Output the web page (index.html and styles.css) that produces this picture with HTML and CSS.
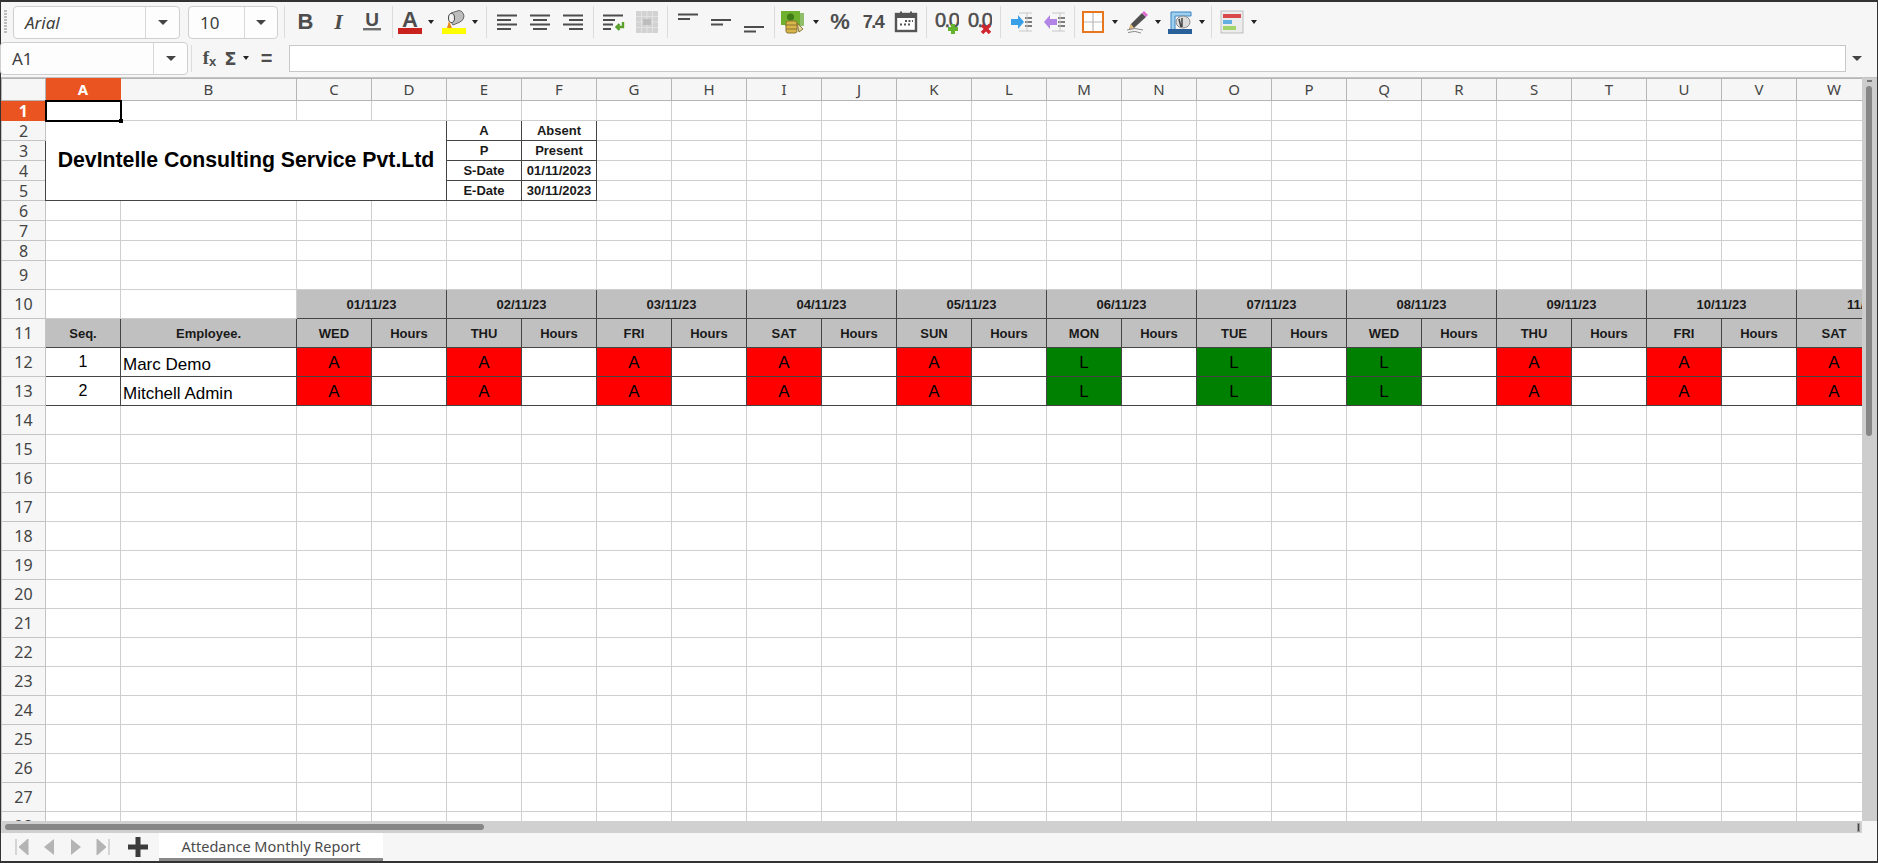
FILE: index.html
```html
<!DOCTYPE html>
<html lang="en">

<head>
    <meta charset="UTF-8">
    <title>Attedance Monthly Report</title>
    <link rel="stylesheet" href="styles.css">
</head>

<body>
<div class="app">
    <div class="toolbar">
        <span class="grip"></span>
        <div class="combo combo-font"><span class="combo-text italic">Arial</span><span class="combo-arrow"><i class="caret"></i></span></div>
        <div class="combo combo-size"><span class="combo-text">10</span><span class="combo-arrow"><i class="caret"></i></span></div>
        <span class="sep sep-first"></span>
        <span class="btn glyph">B</span>
        <span class="btn glyph glyph-i">I</span>
        <span class="btn">
            <svg width="24" height="24" viewBox="0 0 24 24"><text x="12" y="16" class="svg-bold" font-size="19" text-anchor="middle">U</text><rect x="3" y="18" width="18" height="2.400" fill="#6e6e6e"/></svg>
        </span>
        <span class="sep"></span>
        <span class="btn btn-first">
            <svg width="24" height="24" viewBox="0 0 24 24"><text x="12" y="17" class="svg-bold" font-size="22" text-anchor="middle">A</text><rect x="0" y="18" width="24" height="6" fill="#c9211e"/></svg>
        </span>
        <span class="drop"></span>
        <span class="btn">
            <svg width="24" height="24" viewBox="0 0 24 24"><rect x="0" y="18" width="24" height="6" fill="#ffff00"/><path d="M9 3 L17 0.500 Q21 1 22 6 Q22 10 18 12 L11 15 Q8 11 7 8 Z" fill="#bdbdbd" stroke="#666"/><ellipse cx="9.500" cy="8" rx="3" ry="4.500" fill="#f2f2f2" stroke="#444"/><path d="M7 11 L10 18 L5 18 Z" fill="#e8891c"/></svg>
        </span>
        <span class="drop"></span>
        <span class="sep sep-wide"></span>
        <span class="btn"><svg width="24" height="24" viewBox="0 0 24 24"><path d="M2 5.500H22M2 10H16M2 14.500H22M2 19H16" class="svg-line"/></svg></span>
        <span class="btn"><svg width="24" height="24" viewBox="0 0 24 24"><path d="M2 5.500H22M5 10H19M2 14.500H22M5 19H19" class="svg-line"/></svg></span>
        <span class="btn"><svg width="24" height="24" viewBox="0 0 24 24"><path d="M2 5.500H22M8 10H22M2 14.500H22M8 19H22" class="svg-line"/></svg></span>
        <span class="sep"></span>
        <span class="btn">
            <svg width="24" height="24" viewBox="0 0 24 24"><path d="M1 5.500H21M1 10H13M1 14.500H11M1 19H9" class="svg-line"/><path d="M21 12 V17 H15 M17.500 14 L14.500 17 L17.500 20" fill="none" stroke="#5aa02c" stroke-width="2.400"/></svg>
        </span>
        <span class="btn">
            <svg width="24" height="24" viewBox="0 0 24 24"><rect x="1" y="1" width="22" height="22" rx="1" fill="#d2d2d2"/><path d="M1 6.500H23M1 12H23M1 17.500H23M6.500 1V23M12 1V23M17.500 1V23" stroke="#e2e2e2"/><rect x="8" y="9" width="8" height="6" fill="#bdbdbd"/></svg>
        </span>
        <span class="sep"></span>
        <span class="btn"><svg width="24" height="24" viewBox="0 0 24 24"><path d="M2 4.500H22M2 9H14" class="svg-line"/></svg></span>
        <span class="btn"><svg width="24" height="24" viewBox="0 0 24 24"><path d="M2 10H22M2 14.500H14" class="svg-line"/></svg></span>
        <span class="btn"><svg width="24" height="24" viewBox="0 0 24 24"><path d="M2 18H22M2 22.500H14" transform="translate(0 -1)" class="svg-line"/></svg></span>
        <span class="sep"></span>
        <span class="btn btn-first">
            <svg width="24" height="24" viewBox="0 0 24 24"><rect x="5" y="3" width="19" height="13" fill="#8fbf6a"/><rect x="1" y="1" width="19" height="14" fill="#6fb02e"/><circle cx="10.500" cy="7" r="3.500" fill="#3f7a16"/><rect x="6" y="11" width="11" height="12" rx="2" fill="#d9b64a" stroke="#8a7430"/><path d="M6 15H17M6 19H17" stroke="#8a7430"/><path d="M17 13L23 19L19 22Z" fill="#e5d9a6" stroke="#8a7430"/></svg>
        </span>
        <span class="drop drop-gap"></span>
        <span class="btn glyph glyph-small">%</span>
        <span class="btn glyph glyph-num">7.4</span>
        <span class="btn">
            <svg width="24" height="24" viewBox="0 0 24 24"><rect x="2" y="4" width="20" height="17" fill="#fff" stroke="#555" stroke-width="2.400"/><rect x="2" y="3" width="20" height="5" fill="#555"/><rect x="6" y="1.500" width="2" height="3" fill="#555"/><rect x="16" y="1.500" width="2" height="3" fill="#555"/><path d="M11 11h2M14.500 11h2M18 11h1M6 14.500h2M10 14.500h2M14 14.500h2" stroke="#555" stroke-width="2"/></svg>
        </span>
        <span class="sep"></span>
        <span class="btn">
            <svg width="24" height="24" viewBox="0 0 24 24"><text x="0" y="17" class="svg-dec" font-size="20">0.0</text><path d="M13 19H23M18 14V24" stroke="#63b32e" stroke-width="4"/></svg>
        </span>
        <span class="btn">
            <svg width="24" height="24" viewBox="0 0 24 24"><text x="0" y="17" class="svg-dec" font-size="20">0.0</text><path d="M14 15L22 23M22 15L14 23" stroke="#d0262d" stroke-width="3.400"/></svg>
        </span>
        <span class="sep"></span>
        <span class="btn">
            <svg width="24" height="24" viewBox="0 0 24 24"><path d="M2 9H9V5L15 12L9 19V15H2Z" fill="#38a0e8"/><path d="M16 8H23M16 12H23M16 16H23" stroke="#555" stroke-width="1.600"/><path d="M10 3H23M10 21H23M18 3V21" stroke="#c8c8c8"/></svg>
        </span>
        <span class="btn">
            <svg width="24" height="24" viewBox="0 0 24 24"><path d="M15 9H8V5L2 12L8 19V15H15Z" fill="#b184e6"/><path d="M16 8H23M16 12H23M16 16H23" stroke="#555" stroke-width="1.600"/><path d="M10 3H23M10 21H23M18 3V21" stroke="#c8c8c8"/></svg>
        </span>
        <span class="sep sep-thin"></span>
        <span class="btn">
            <svg width="24" height="24" viewBox="0 0 24 24"><rect x="2" y="2" width="20" height="20" fill="#fff" stroke="#e8761c" stroke-width="2"/><path d="M12 3V21M3 12H21" stroke="#b9b9b9" stroke-width="1.200"/></svg>
        </span>
        <span class="drop"></span>
        <span class="btn btn-pack">
            <svg width="24" height="24" viewBox="0 0 24 24"><path d="M17 3L21 7L9 18L4 19L6 14Z" fill="#4f4f4f"/><path d="M17 3L19 1L23 5L21 7Z" fill="#e06ad0"/><path d="M6 14L4 19L9 18Z" fill="#e5c07a"/><path d="M2 20Q10 17 18 20M3 22.500Q10 20 16 23" fill="none" stroke="#8a8a8a"/></svg>
        </span>
        <span class="drop"></span>
        <span class="btn btn-pack">
            <svg width="24" height="24" viewBox="0 0 24 24"><path d="M3 22V2H23V6H7V22" fill="#9fd0ee" stroke="#3a82c4"/><rect x="0" y="19" width="24" height="5" fill="#2a6099"/><ellipse cx="15" cy="12" rx="7" ry="6" fill="#dcdcdc" stroke="#8a8a8a"/><path d="M11 9L13 17M14 8V17" stroke="#444" stroke-width="1.500"/></svg>
        </span>
        <span class="drop"></span>
        <span class="sep"></span>
        <span class="btn">
            <svg width="24" height="24" viewBox="0 0 24 24"><rect x="1" y="1" width="22" height="22" fill="#ececec" stroke="#bdbdbd"/><rect x="3" y="4" width="18" height="4" fill="#d84a4a"/><rect x="3" y="10" width="9" height="4" fill="#63b0e0"/><rect x="3" y="16" width="13" height="4" fill="#a3d46a"/></svg>
        </span>
        <span class="drop"></span>
    </div>

    <div class="formula-bar">
        <div class="combo combo-name"><span class="combo-text">A1</span><span class="combo-arrow"><i class="caret"></i></span></div>
        <span class="sep sep-short"></span>
        <span class="fx">f<sub>x</sub></span>
        <span class="fx fx-sigma">Σ</span>
        <span class="drop drop-small"></span>
        <span class="fx fx-eq">=</span>
        <div class="formula-input"></div>
        <span class="formula-arrow"><i class="caret"></i></span>
    </div>

    <div class="middle">
        <div class="sheet">
            <table class="grid" id="grid"></table>
        </div>
        <div class="vscroll"><span class="vscroll-min"></span><span class="vscroll-thumb"></span></div>
    </div>

    <div class="hscroll"><span class="hscroll-thumb"></span><span class="hscroll-end"></span></div>

    <div class="tabbar">
        <span class="nav"><svg width="14" height="18" viewBox="0 0 14 18"><path d="M1 1V17M13 1V17L4 9Z" fill="#b4b4b4" stroke="#b4b4b4"/></svg></span>
        <span class="nav"><svg width="14" height="18" viewBox="0 0 14 18"><path d="M12 1V17L2 9Z" fill="#b4b4b4"/></svg></span>
        <span class="nav"><svg width="14" height="18" viewBox="0 0 14 18"><path d="M2 1V17L12 9Z" fill="#b4b4b4"/></svg></span>
        <span class="nav"><svg width="14" height="18" viewBox="0 0 14 18"><path d="M13 1V17M1 1V17L10 9Z" fill="#b4b4b4" stroke="#b4b4b4"/></svg></span>
        <span class="nav-add"><svg width="20" height="20" viewBox="0 0 20 20"><path d="M10 0V20M0 10H20" stroke="#3c3c3c" stroke-width="5"/></svg></span>
        <span class="tab">Attedance Monthly Report</span>
    </div>
</div>
<script src="sheet.js"></script>
</body>

</html>
```

FILE: styles.css
```css
html,
body {
    margin: 0;
    height: 100%;
    overflow: hidden;
    font-family: "Noto Sans", "Open Sans", sans-serif;
}

.app {
    display: flex;
    flex-direction: column;
    box-sizing: border-box;
    width: 1878px;
    height: 863px;
    border: 1px solid #333;
    border-width: 2px 1px;
    background: #f6f6f6;
    color: #3d3d3d;
}

/* top toolbar */
.toolbar {
    display: flex;
    align-items: center;
    height: 40px;
    flex: none;
    padding-left: 3px;
}

.grip {
    width: 3px;
    height: 24px;
    margin-right: 6px;
    background: repeating-linear-gradient(#bdbdbd 0, #bdbdbd 2px, transparent 2px, transparent 3px);
}

.combo {
    display: flex;
    box-sizing: border-box;
    height: 33px;
    border: 1px solid #cfcfcf;
    border-radius: 4px;
    background: #fdfdfd;
    font-size: 17px;
    line-height: 31px;
}

.combo-font {
    width: 167px;
    margin-right: 8px;
}

.combo-size {
    width: 90px;
}

.combo-name {
    width: 188px;
    margin-left: -1px;
}

.combo-text {
    flex: 1;
    padding-left: 11px;
}

.italic {
    font-style: italic;
}

.combo-arrow {
    display: flex;
    align-items: center;
    justify-content: center;
    width: 33px;
    border-left: 1px solid #d8d8d8;
}

.combo-size .combo-arrow {
    width: 32px;
}

.caret {
    display: block;
    border-top: 5px solid #444;
    border-left: 5px solid transparent;
    border-right: 5px solid transparent;
}

.sep {
    flex: none;
    width: 1px;
    height: 32px;
    margin: 0 3.5px;
    background: #dcdcdc;
}

.sep-first {
    margin: 0 4px 0 6px;
}

.sep-wide {
    margin-left: 5px;
}

.sep-thin {
    margin: 0 1.5px 0 3.5px;
}

.sep-short {
    height: 27px;
    margin: 0 7px 0 3px;
}

.btn {
    display: flex;
    flex: none;
    align-items: center;
    justify-content: center;
    width: 33px;
    height: 40px;
}

.btn-first {
    margin-left: -3px;
}

.btn-pack {
    margin-left: -0.5px;
}

.glyph {
    font-family: "Liberation Sans", sans-serif;
    font-size: 22px;
    font-weight: bold;
    color: #4d4d4d;
}

.glyph-i {
    font-family: "Liberation Serif", serif;
    font-style: italic;
}

.glyph-num {
    font-size: 18px;
    letter-spacing: -1.5px;
}

.drop {
    position: relative;
    flex: none;
    width: 11px;
    height: 40px;
}

.drop::after {
    content: "";
    position: absolute;
    left: 2px;
    top: 18px;
    border-top: 4px solid #222;
    border-left: 3.5px solid transparent;
    border-right: 3.5px solid transparent;
}

.drop-small {
    width: 15px;
}

.drop-gap {
    margin: 0 2px;
}

.svg-line {
    fill: none;
    stroke: #4d4d4d;
    stroke-width: 1.8;
}

.svg-bold {
    font-family: "Liberation Sans", sans-serif;
    font-weight: bold;
    fill: #4d4d4d;
}

.svg-dec {
    font-family: "Liberation Sans", sans-serif;
    letter-spacing: -1.5px;
    stroke: #4d4d4d;
    stroke-width: 0.5;
    fill: #4d4d4d;
}

/* formula bar */
.formula-bar {
    display: flex;
    align-items: center;
    flex: none;
    height: 32px;
    padding-bottom: 3px;
    border-bottom: 1px solid #c4c4c4;
}

.fx {
    width: 21px;
    font-family: "Liberation Serif", serif;
    font-size: 19px;
    font-weight: bold;
    color: #4d4d4d;
    text-align: center;
}

.fx sub {
    font-family: "Liberation Sans", sans-serif;
    font-size: 13px;
    vertical-align: -2px;
    line-height: 0;
}

.fx-sigma {
    font-family: "DejaVu Sans", sans-serif;
    font-size: 18px;
}

.fx-eq {
    font-family: "Liberation Sans", sans-serif;
    font-size: 20px;
}

.formula-input {
    box-sizing: border-box;
    width: 1557px;
    height: 27px;
    margin-left: 12px;
    border: 1px solid #c8c8c8;
    background: #fff;
}

.formula-arrow {
    margin-left: 6px;
}

/* sheet */
.middle {
    display: flex;
    flex: 1;
    min-height: 0;
}

.sheet {
    flex: none;
    width: 1861px;
    overflow: hidden;
    background: #fff;
}

.grid {
    border-collapse: collapse;
    table-layout: fixed;
    width: 1870px;
    font-family: "Liberation Sans", sans-serif;
    color: #000;
}

.grid th,
.grid td {
    box-sizing: border-box;
    padding: 0;
    border: 1px solid #cfcfcf;
    line-height: 1;
    text-align: center;
    overflow: hidden;
    white-space: nowrap;
}

.grid .col-row {
    width: 44px;
}

.grid .col-a {
    width: 75px;
}

.grid .col-b {
    width: 176px;
}

.grid .col-day {
    width: 75px;
}

.grid .head {
    height: 22px;
    border-color: #b5b5b5;
    background: #f6f6f6;
    font-family: "Noto Sans", "Open Sans", sans-serif;
    font-size: 15px;
    font-weight: normal;
    color: #444;
}

.grid .rowhead {
    border-color: #c4c4c4;
    background: #f6f6f6;
    font-family: "Noto Sans", "Open Sans", sans-serif;
    font-size: 16px;
    font-weight: normal;
    color: #444;
}

.grid .active {
    border-color: #e95420;
    background: #e95420;
    color: #fff;
    font-weight: bold;
}

.row-small {
    height: 20px;
}

.row-big {
    height: 29px;
}

.grid .selected {
    position: relative;
    border: 2px solid #000;
    overflow: visible;
}

.selected::after {
    content: "";
    position: absolute;
    right: -3px;
    bottom: -3px;
    width: 4px;
    height: 4px;
    background: #000;
}

.grid .box {
    border: 1px solid #444;
}

.grid .title {
    font-size: 21.25px;
    font-weight: bold;
}

.grid .label {
    font-size: 13px;
    font-weight: bold;
    color: #1a1a1a;
}

.grid .gray {
    background: #c0c0c0;
}

.grid .num {
    font-size: 16px;
}

.grid .name {
    padding: 5px 0 0 2px;
    font-size: 17px;
    text-align: left;
}

.grid .absent {
    background: #ff0000;
    font-size: 17px;
}

.grid .leave {
    background: #008000;
    font-size: 17px;
}

/* scrollbars */
.vscroll {
    position: relative;
    flex: 1;
    background: #cdcdcd;
}

.vscroll-min {
    position: absolute;
    left: 5px;
    top: 2px;
    width: 5px;
    height: 2px;
    background: #777;
}

.vscroll-thumb {
    position: absolute;
    left: 4px;
    top: 8px;
    width: 6px;
    height: 350px;
    border-radius: 3px;
    background: #868686;
}

.hscroll {
    display: flex;
    align-items: center;
    justify-content: space-between;
    flex: none;
    width: 1861px;
    height: 12px;
    background: #d0d0d0;
}

.hscroll-thumb {
    width: 479px;
    height: 6px;
    margin-left: 4px;
    border-radius: 3px;
    background: #868686;
}

.hscroll-end {
    width: 1px;
    height: 7px;
    margin-right: 3px;
    box-shadow: 0 0 0 1px #999;
    background: #444;
}

/* sheet tabs */
.tabbar {
    display: flex;
    align-items: stretch;
    flex: none;
    height: 28px;
}

.nav {
    display: flex;
    align-items: center;
    justify-content: center;
    width: 27px;
}

.nav:first-child {
    margin-left: 7px;
}

.nav-add {
    display: flex;
    align-items: center;
    justify-content: center;
    width: 40px;
    margin-left: 2px;
}

.tab {
    box-sizing: border-box;
    width: 224px;
    margin-left: 1px;
    border-bottom: 3px solid #8a8a8a;
    background: #fff;
    font-size: 14.5px;
    line-height: 26px;
    color: #4a4a4a;
    text-align: center;
}
```

FILE: sheet.js
```js
var grid = document.getElementById("grid");
var colNames = "ABCDEFGHIJKLMNOPQRSTUVWX".split("");
var days = [
    ["01/11/23", "WED", "A"],
    ["02/11/23", "THU", "A"],
    ["03/11/23", "FRI", "A"],
    ["04/11/23", "SAT", "A"],
    ["05/11/23", "SUN", "A"],
    ["06/11/23", "MON", "L"],
    ["07/11/23", "TUE", "L"],
    ["08/11/23", "WED", "L"],
    ["09/11/23", "THU", "A"],
    ["10/11/23", "FRI", "A"],
    ["11/11/23", "SAT", "A"]
];
var legend = [
    ["A", "Absent"],
    ["P", "Present"],
    ["S-Date", "01/11/2023"],
    ["E-Date", "30/11/2023"]
];

function emptyCells(n) {
    var html = "";
    for (var i = 0; i < n; i++) {
        html += "<td></td>";
    }
    return html;
}

function row(num, cells, small, active) {
    var rowClass = small ? "row-small" : "row-big";
    var headClass = active ? "rowhead active" : "rowhead";
    return '<tr class="' + rowClass + '"><th class="' + headClass + '">' + num + "</th>" + cells + "</tr>";
}

var html = '<colgroup><col class="col-row"><col class="col-a"><col class="col-b">';
for (var i = 2; i < colNames.length; i++) {
    html += '<col class="col-day">';
}
html += "</colgroup><tr><th class=\"head\"></th>";
for (var i = 0; i < colNames.length; i++) {
    html += '<th class="head' + (i == 0 ? " active" : "") + '">' + colNames[i] + "</th>";
}
html += "</tr>";

// rows 1 to 9, title block and legend
html += row(1, '<td class="selected"></td>' + emptyCells(23), true, true);
for (var i = 0; i < legend.length; i++) {
    var cells = "";
    if (i == 0) {
        cells += '<td class="box title" colspan="4" rowspan="4">DevIntelle Consulting Service Pvt.Ltd</td>';
    }
    cells += '<td class="box label">' + legend[i][0] + '</td><td class="box label">' + legend[i][1] + "</td>" + emptyCells(18);
    html += row(i + 2, cells, true);
}
for (var i = 6; i <= 8; i++) {
    html += row(i, emptyCells(24), true);
}
html += row(9, emptyCells(24));

// rows 10 and 11, date headers
var dates = emptyCells(2);
var heads = '<td class="box gray label">Seq.</td><td class="box gray label">Employee.</td>';
var marc = '<td class="box num">1</td><td class="box name">Marc Demo</td>';
var mitchell = '<td class="box num">2</td><td class="box name">Mitchell Admin</td>';
for (var i = 0; i < days.length; i++) {
    var state = days[i][2] == "A" ? "absent" : "leave";
    var cell = '<td class="box ' + state + '">' + days[i][2] + '</td><td class="box"></td>';
    dates += '<td class="box gray label" colspan="2">' + days[i][0] + "</td>";
    heads += '<td class="box gray label">' + days[i][1] + '</td><td class="box gray label">Hours</td>';
    marc += cell;
    mitchell += cell;
}
html += row(10, dates) + row(11, heads) + row(12, marc) + row(13, mitchell);

for (var i = 14; i <= 28; i++) {
    html += row(i, emptyCells(24));
}
grid.innerHTML = html;
```
